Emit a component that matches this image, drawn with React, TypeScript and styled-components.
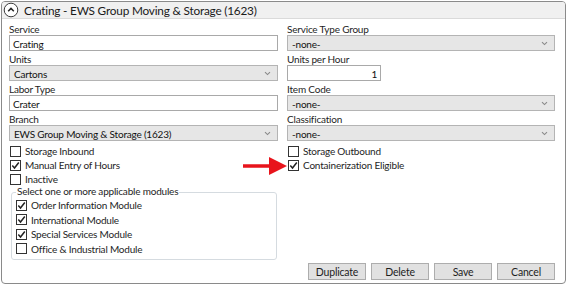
import React from 'react';
import styled, { createGlobalStyle } from 'styled-components';

const Global = createGlobalStyle`
  html, body { margin: 0; padding: 0; background: #fff; }
  body { font-family: Lato, "Open Sans", sans-serif; font-size: 10px; letter-spacing: -0.2px; color: #1e1e1e; }
  * { box-sizing: border-box; }
`;

const Panel = styled.div`
  position: relative;
  margin: 1px 0 0 1px;
  width: 565px;
  height: 283px;
  border: 1px solid #8a8a8a;
  border-radius: 4px;
  display: flex;
  flex-direction: column;
  overflow: hidden;
`;

const Header = styled.div`
  height: 17px;
  flex: none;
  background: #f0f0f0;
  border-bottom: 1px solid #dadada;
  display: flex;
  align-items: center;
  gap: 5px;
  padding-left: 1px;
  font-size: 11.8px;
  letter-spacing: -0.2px;
  color: #1a1a1a;
`;

const Body = styled.div`
  flex: 1;
  display: grid;
  grid-template-columns: 269px 268px;
  column-gap: 9px;
  padding: 2px 10px 0 7px;
  align-items: start;
`;

const Column = styled.div`
  display: flex;
  flex-direction: column;
`;

const Field = styled.div`
  display: flex;
  flex-direction: column;
`;

const Label = styled.div`
  height: 14px;
  line-height: 16px;
  font-size: 10px;
  color: #1e1e1e;
`;

const TextBox = styled.div<{ $w?: number; $right?: boolean }>`
  height: 16px;
  width: ${p => (p.$w ? `${p.$w}px` : '100%')};
  border: 1px solid #a9a9a9;
  background: #fff;
  display: flex;
  align-items: center;
  justify-content: ${p => (p.$right ? 'flex-end' : 'flex-start')};
  padding: 1px 3px 0;
  font-size: 10px;
  color: #111;
`;

const SelectBox = styled.div`
  height: 16px;
  width: 100%;
  border: 1px solid #b4b4b4;
  background: #e6e6e6;
  display: flex;
  align-items: center;
  justify-content: space-between;
  padding: 1px 6px 0 4px;
  font-size: 10px;
  color: #111;
`;

const CheckList = styled.div<{ $top?: number }>`
  display: flex;
  flex-direction: column;
  margin-top: ${p => p.$top ?? 3}px;
  padding-left: 1px;
`;

const CheckRow = styled.label`
  height: 14px;
  display: flex;
  align-items: center;
  gap: 4px;
  font-size: 10px;
  color: #1e1e1e;
`;

const ModuleRow = styled(CheckRow)`
  height: 14.5px;
`;

const Box = styled.span`
  width: 11px;
  height: 11px;
  border: 1px solid #333;
  background: #fff;
  display: inline-flex;
  align-items: center;
  justify-content: center;
  flex: none;
`;

const Group = styled.fieldset`
  margin: 0 1px 0 2px;
  padding: 0 4px 3px 4px;
  border: 1px solid #d5dbe0;
  border-radius: 3px;
  min-width: 0;
`;

const Legend = styled.legend`
  padding: 0 1px;
  height: 12px;
  line-height: 11px;
  font-size: 10px;
  color: #1e1e1e;
`;

const Footer = styled.div`
  display: flex;
  justify-content: flex-end;
  gap: 5px;
  padding: 0 10px 3px 0;
`;

const Button = styled.button`
  width: 58px;
  height: 17px;
  border: 1px solid #adadad;
  background: #e1e1e1;
  font-family: inherit;
  font-size: 10.5px;
  letter-spacing: -0.2px;
  color: #1e1e1e;
  padding: 0;
`;

const Arrow = styled.svg`
  position: absolute;
  left: 238px;
  top: 151px;
`;

const Chevron = () => (
  <svg width="7" height="5" viewBox="0 0 7 5">
    <path d="M1 1.2 L3.5 3.6 L6 1.2" fill="none" stroke="#8a8a8a" strokeWidth="1.1" />
  </svg>
);

const Tick = () => (
  <svg width="9" height="9" viewBox="0 0 9 9">
    <path d="M1.3 4.6 L3.5 7 L7.8 1.5" fill="none" stroke="#222" strokeWidth="1.5" />
  </svg>
);

const Check: React.FC<{ checked?: boolean; label: string }> = ({ checked, label }) => (
  <CheckRow>
    <Box>{checked && <Tick />}</Box>
    {label}
  </CheckRow>
);

const ModuleCheck: React.FC<{ checked?: boolean; label: string }> = ({ checked, label }) => (
  <ModuleRow>
    <Box>{checked && <Tick />}</Box>
    {label}
  </ModuleRow>
);

const Select: React.FC<{ value: string }> = ({ value }) => (
  <SelectBox>
    <span>{value}</span>
    <Chevron />
  </SelectBox>
);

export default function App() {
  return (
    <>
      <Global />
      <Panel>
        <Header>
          <svg width="16" height="16" viewBox="0 0 16 16">
            <circle cx="8" cy="8" r="6.8" fill="#fff" stroke="#3a3a3a" strokeWidth="1" />
            <path d="M5.2 9.2 L8 6.4 L10.8 9.2" fill="none" stroke="#222" strokeWidth="1.5" />
          </svg>
          Crating - EWS Group Moving &amp; Storage (1623)
        </Header>
        <Body>
          <Column>
            <Field>
              <Label>Service</Label>
              <TextBox>Crating</TextBox>
            </Field>
            <Field>
              <Label>Units</Label>
              <Select value="Cartons" />
            </Field>
            <Field>
              <Label>Labor Type</Label>
              <TextBox>Crater</TextBox>
            </Field>
            <Field>
              <Label>Branch</Label>
              <Select value="EWS Group Moving & Storage (1623)" />
            </Field>
            <CheckList>
              <Check label="Storage Inbound" />
              <Check checked label="Manual Entry of Hours" />
              <Check label="Inactive" />
            </CheckList>
            <Group>
              <Legend>Select one or more applicable modules</Legend>
              <ModuleCheck checked label="Order Information Module" />
              <ModuleCheck checked label="International Module" />
              <ModuleCheck checked label="Special Services Module" />
              <ModuleCheck label="Office & Industrial Module" />
            </Group>
          </Column>
          <Column>
            <Field>
              <Label>Service Type Group</Label>
              <Select value="-none-" />
            </Field>
            <Field>
              <Label>Units per Hour</Label>
              <TextBox $w={94} $right>1</TextBox>
            </Field>
            <Field>
              <Label>Item Code</Label>
              <Select value="-none-" />
            </Field>
            <Field>
              <Label>Classification</Label>
              <Select value="-none-" />
            </Field>
            <CheckList>
              <Check label="Storage Outbound" />
              <Check checked label="Containerization Eligible" />
            </CheckList>
          </Column>
        </Body>
        <Footer>
          <Button>Duplicate</Button>
          <Button>Delete</Button>
          <Button>Save</Button>
          <Button>Cancel</Button>
        </Footer>
        <Arrow width="50" height="26" viewBox="0 0 50 26">
          <path d="M3 11.2 L29 11.2 L29 4 L47 13 L29 22 L29 14.8 L3 14.8 Z" fill="#e8141c" />
        </Arrow>
      </Panel>
    </>
  );
}
